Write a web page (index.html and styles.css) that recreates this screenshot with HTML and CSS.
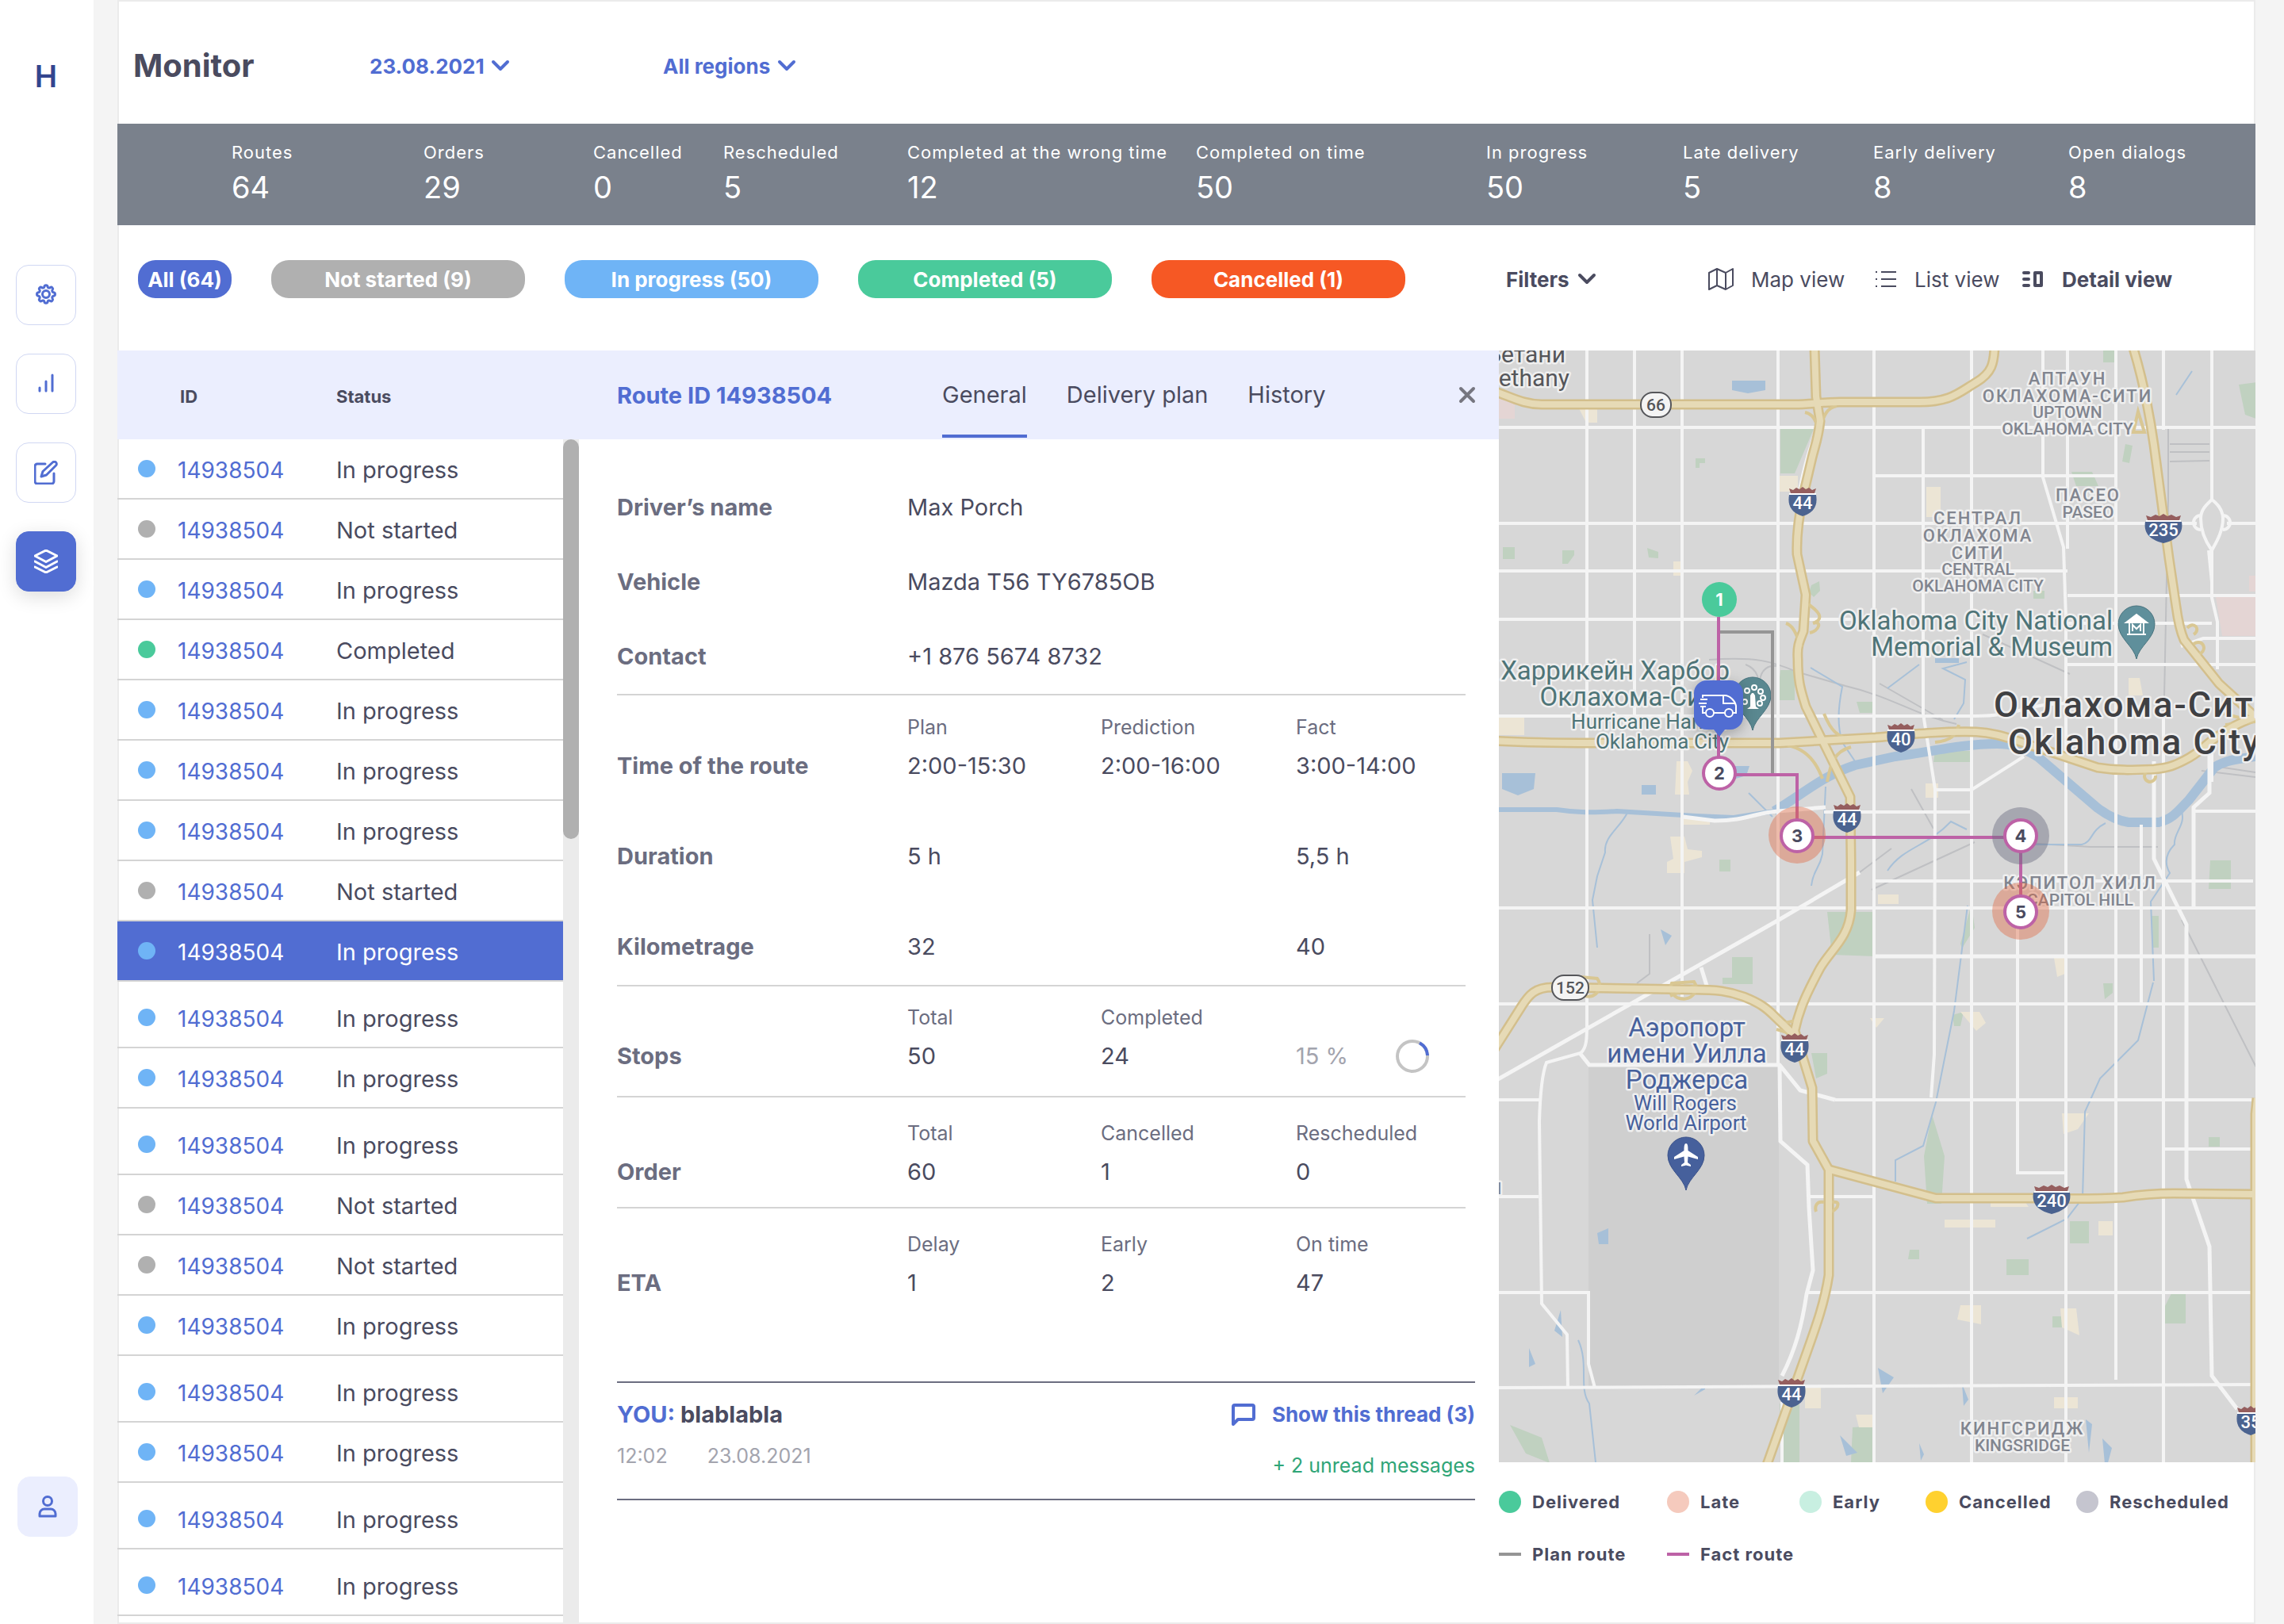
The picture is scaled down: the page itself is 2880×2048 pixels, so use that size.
FILE: index.html
```html
<!DOCTYPE html>
<html lang="en">
<head>
    <meta charset="UTF-8">
    <meta name="viewport" content="width=device-width, initial-scale=1.0">
    <title>Monitor</title>
    <link rel="stylesheet" href="styles.css">
</head>
<body>
    <aside class="sidebar">
        <a class="logo" href="#">H</a>
        <nav class="side-nav">
            <button class="side-btn" aria-label="Settings">
                <svg width="30" height="30" viewBox="0 0 30 30"><path d="M13 4.200c.3-2 3.700-2 4 0 .3 1.900 2.100 2.400 3.500 1.300 1.600-1.200 3.900 1.100 2.800 2.700-1.100 1.500-.5 3.200 1.300 3.500 2.500.4 2.500 4.200 0 4.600-1.800.3-2.400 2-1.300 3.500 1.100 1.600-1.200 3.900-2.800 2.700-1.400-1.100-3.200-.6-3.500 1.300-.3 2-3.700 2-4 0-.3-1.900-2.100-2.400-3.500-1.300-1.600 1.200-3.900-1.100-2.800-2.700 1.100-1.500.5-3.200-1.300-3.500-2.500-.4-2.500-4.200 0-4.600 1.800-.3 2.400-2 1.300-3.500C5.600 6.600 7.900 4.300 9.500 5.500c1.400 1.100 3.200.6 3.500-1.300z"/><circle cx="15" cy="14" r="4.500"/></svg>
            </button>
            <button class="side-btn" aria-label="Statistics">
                <svg width="30" height="30" viewBox="0 0 30 30"><path d="M7 20v4M15 12v12M23 4v20"/></svg>
            </button>
            <button class="side-btn" aria-label="Edit">
                <svg width="30" height="30" viewBox="0 0 30 30"><path d="M14 4H4a3 3 0 0 0-3 3v19a3 3 0 0 0 3 3h18a3 3 0 0 0 3-3V16"/><path d="M23.500 2a2.800 2.800 0 0 1 4 4L15.500 18 9 20l2-6.500z"/></svg>
            </button>
            <button class="side-btn active" aria-label="Routes">
                <svg width="30" height="30" viewBox="0 0 30 30"><path d="M15 1l14 7-14 7.500L1 8zM1 15l14 7.500L29 15M1 22l14 7 14-7"/></svg>
            </button>
        </nav>
        <button class="side-btn user" aria-label="Profile">
            <svg width="30" height="30" viewBox="0 0 30 30"><circle cx="15" cy="8" r="5.500"/><path d="M5 27v-3a6 6 0 0 1 6-6h8a6 6 0 0 1 6 6v3z"/></svg>
        </button>
    </aside>

    <main class="card">
        <header class="page-header">
            <h1>Monitor</h1>
            <div class="picker date">
                <select aria-label="Date"><option>23.08.2021</option></select>
                <svg class="chevron" width="24" height="16" viewBox="0 0 24 16"><path d="M3 3l9 9 9-9"/></svg>
            </div>
            <div class="picker region">
                <select aria-label="Region"><option>All regions</option></select>
                <svg class="chevron" width="24" height="16" viewBox="0 0 24 16"><path d="M3 3l9 9 9-9"/></svg>
            </div>
        </header>

        <dl class="stats">
            <div><dt>Routes</dt><dd>64</dd></div>
            <div><dt>Orders</dt><dd>29</dd></div>
            <div><dt>Cancelled</dt><dd>0</dd></div>
            <div><dt>Rescheduled</dt><dd>5</dd></div>
            <div><dt>Completed at the wrong time</dt><dd>12</dd></div>
            <div><dt>Completed on time</dt><dd>50</dd></div>
            <div><dt>In progress</dt><dd>50</dd></div>
            <div><dt>Late delivery</dt><dd>5</dd></div>
            <div><dt>Early delivery</dt><dd>8</dd></div>
            <div><dt>Open dialogs</dt><dd>8</dd></div>
        </dl>

        <div class="toolbar">
            <div class="pills">
                <button class="pill all">All (64)</button>
                <button class="pill not-started">Not started (9)</button>
                <button class="pill in-progress">In progress (50)</button>
                <button class="pill completed">Completed (5)</button>
                <button class="pill cancelled">Cancelled (1)</button>
            </div>
            <button class="filters">Filters
                <svg class="chevron" width="24" height="16" viewBox="0 0 24 16"><path d="M3 3l9 9 9-9"/></svg>
            </button>
            <div class="views">
                <button class="view">
                    <svg width="32" height="30" viewBox="0 0 32 30"><path d="M1 7l10-5 11 5 9-5v21l-9 5-11-5-10 5zM11 2v21M22 7v21"/></svg>
                    Map view
                </button>
                <button class="view">
                    <svg width="28" height="24" viewBox="0 0 28 24"><path d="M8 3h19M8 12h19M8 21h19M1 3h2M1 12h2M1 21h2"/></svg>
                    List view
                </button>
                <button class="view current">
                    <svg width="28" height="22" viewBox="0 0 28 22"><path d="M2 3h6M2 11h6M2 19h6M16 3h8v16h-8z"/></svg>
                    Detail view
                </button>
            </div>
        </div>

        <div class="panels">
            <section class="routes">
                <div class="routes-scroll">
                    <table>
                        <thead>
                            <tr><th class="dot-col"></th><th class="id-col">ID</th><th>Status</th></tr>
                        </thead>
                        <tbody id="route-rows"></tbody>
                    </table>
                </div>
                <div class="scrollbar"><div class="thumb"></div></div>
            </section>

            <section class="detail">
                <div class="detail-header">
                    <h2>Route ID 14938504</h2>
                    <nav class="tabs">
                        <a class="tab selected" href="#general">General</a>
                        <a class="tab" href="#plan">Delivery plan</a>
                        <a class="tab" href="#history">History</a>
                    </nav>
                    <button class="close" aria-label="Close">
                        <svg width="24" height="24" viewBox="0 0 24 24"><path d="M4 4l16 16M20 4L4 20"/></svg>
                    </button>
                </div>

                <div class="detail-body">
                    <div class="group driver">
                        <div class="row"><b>Driver’s name</b><span>Max Porch</span></div>
                        <div class="row"><b>Vehicle</b><span>Mazda T56 TY6785OB</span></div>
                        <div class="row"><b>Contact</b><span>+1 876 5674 8732</span></div>
                    </div>
                    <div class="group time">
                        <div class="row caption"><i></i><span>Plan</span><span>Prediction</span><span>Fact</span></div>
                        <div class="row"><b>Time of the route</b><span>2:00-15:30</span><span>2:00-16:00</span><span>3:00-14:00</span></div>
                        <div class="row spaced"><b>Duration</b><span>5 h</span><i></i><span>5,5 h</span></div>
                        <div class="row spaced"><b>Kilometrage</b><span>32</span><i></i><span>40</span></div>
                    </div>
                    <div class="group stops">
                        <div class="row caption"><i></i><span>Total</span><span>Completed</span></div>
                        <div class="row"><b>Stops</b><span>50</span><span>24</span>
                            <span class="percent">15 %
                                <svg width="42" height="42" viewBox="0 0 42 42"><circle cx="21" cy="21" r="19" stroke="#c4c4c4"/><path d="M30 4.300A19 19 0 0 1 40 20" stroke="#516dd2"/></svg>
                            </span>
                        </div>
                    </div>
                    <div class="group order">
                        <div class="row caption"><i></i><span>Total</span><span>Cancelled</span><span>Rescheduled</span></div>
                        <div class="row"><b>Order</b><span>60</span><span>1</span><span>0</span></div>
                    </div>
                    <div class="group eta">
                        <div class="row caption"><i></i><span>Delay</span><span>Early</span><span>On time</span></div>
                        <div class="row"><b>ETA</b><span>1</span><span>2</span><span>47</span></div>
                    </div>

                    <div class="thread">
                        <div>
                            <p class="message"><span class="author">YOU:</span> blablabla</p>
                            <p class="sent"><span>12:02</span><span>23.08.2021</span></p>
                        </div>
                        <div class="thread-side">
                            <a class="thread-link" href="#thread">
                                <svg width="30" height="28" viewBox="0 0 30 28"><path d="M2 26V4a2 2 0 0 1 2-2h22a2 2 0 0 1 2 2v14a2 2 0 0 1-2 2H8z"/></svg>
                                Show this thread (3)
                            </a>
                            <p class="unread">+ 2 unread messages</p>
                        </div>
                    </div>
                </div>
            </section>

            <section class="map-panel">
                <svg class="map" viewBox="1890 442 954 1402" preserveAspectRatio="xMidYMid slice" role="img" aria-label="Route map">
                    <defs>
                        <g id="shield">
                            <path d="M-17 -8h34c2 12-1 22-17 27-16-5-19-15-17-27z" fill="#4b6390"/>
                            <path d="M-15 -10l-2-6 5 2 4-3 4 2 4-3 4 3 4-2 4 3 5-2-2 6z" fill="#955e5e"/>
                            <path d="M-17 -9h34" stroke="#fff" stroke-width="2"/>
                        </g>
                        <g id="shield-wide">
                            <path d="M-23 -8h46c2 12-3 22-23 27-20-5-25-15-23-27z" fill="#4b6390"/>
                            <path d="M-20 -10l-2-6 6 2 6-3 5 2 5-3 5 3 5-2 6 3 6-2-2 6z" fill="#955e5e"/>
                            <path d="M-22 -9h44" stroke="#fff" stroke-width="2"/>
                        </g>
                        <path id="pin" d="M0 44C-3 28-23 18-23 0a23 23 0 0 1 46 0c0 18-20 28-23 44z"/>
                        <path id="h66" d="M1880 492c25 8 40 18 64 18h319c20 0 35-3 57-3h100c40 0 50-12 72-25 20-12 22-24 23-43"/>
                        <path id="h44" d="M2288 439l2 61 5 31c-2 20-6 30-10 46l-12 51c-4 22-8 45-7 71l11 51-3 46c-6 15-8 20-7 35 0 30 4 40 10 60l24 49 32 65 1 78v65c-3 35-24 48-39 73-16 30-26 50-32 79l22 72 1 67 20 36v133c-6 40-20 75-34 115l-44 124"/>
                        <path id="h40" d="M1880 934c60 4 110 3 172 3h192l121-7c45-4 80-8 127-7 20 1 35 6 51 11l102 34c25 4 45 3 71 2 20-2 26-5 38-11 18-9 22-15 32-23 20-14 30-22 58-32"/>
                        <path id="h235" d="M2690 439c12 40 20 80 26 122l19 143 9 61c2 15 4 28 10 42l44 55 46 42"/>
                        <path id="h240" d="M2307 1475l134 36h141c35 1 60 1 95-1 25-4 40-5 64-5l103 1"/>
                        <path id="h152" d="M1880 1330l38-60c10-16 18-25 40-25l177 3c30 0 45 2 64 9 20 8 28 14 38 24l26 25"/>
                        <path id="h35" d="M2846 1385l-2 20v445"/>
                    </defs>

                    <rect x="1890" y="442" width="954" height="1402" fill="#d7d7d7"/>
                    <path d="M2003 1342h240v404l-240 4z" fill="#cfcfcf"/>

                    <!-- parks, squares, schools -->
                    <path d="M2245 541h42l-24 56h-18zM2652 442h14v15h-14zM2823 485l22-3v46l-14-5zM2680 560l9 2-4 22-9-2zM2138 578h12v6h-7v6h-5zM1895 690h15v15h-15zM1970 694h15v6l-8 11h-7zM2077 691l14 5v8l-12-1zM2284 738l10-5 1 12-8 8-6-6zM2245 845h18v38h-22zM2341 885h22v14h-18zM2440 947h46v14h-48zM2168 1084h14v15h-14zM2304 1150h60v56l-54-2zM2184 1207h26v34h-38v-8h12zM2564 745h14v10h-14zM2787 1085h26v36h-28zM2436 1405l16 53-4 60h-18l-4-60zM2284 1328h20v26l-14 6zM2244 1770h25v76h-22zM2336 1800l28-2v46h-30zM2530 1588h28v20h-28zM2610 1540h24v28h-24zM2738 1631h18v38h-28v-18zM2408 1576h12v12h-14zM1904 1797l40 16 10 32-30-12zM2785 1434h14v12h-14zM2462 1280l14-4-4 18h-8zM2712 1155h10v40h-8zM2612 595h26l8 18h-28zM2486 1140l-14 50 2 6 16-26zM2652 1240h12v12l-10 8zM2588 1660h12v14h-12z" fill="#c0d1c0"/>
                    <path d="M1990 513h24v20h-14zM2241 600h26v20h-26zM2429 614h18v38h-18zM2110 708h10v18h-10zM1890 905h32v22h-32zM2114 960h14l6 12-6 14 2 16h-18zM2120 1030h36v10h-36zM2106 1055h18l4 16 18 2v8l-22 6v14h-22v-14l8-4zM2428 988h16v18h-16zM2368 1128h26v12h-26zM2590 1208h14v20l-10 4zM2472 1276h24l8 14-12 10zM2600 1404h34l-14 20-18 6zM2510 1508h38l10 14h-48zM2452 1538h64v10h-64zM2646 1540h18v18h-18zM2472 1646h26v24l-30-6zM2598 1650h20l4 34-22-10zM2590 1762h30v14h-30zM2276 1750h20v26h-20zM2340 1784h24v16h-20zM2684 855h14l4 22h-18zM2358 1284h18l-10 12z" fill="#ece5d5"/>
                    <path d="M2794 753h50v49h-42zM2836 726h8v20h-8zM1890 500h20v28h-20z" fill="#e4d5d4"/>
                    <path d="M2184 480h42v12l-22 4-20-4zM1894 975h42l-2 20-20 8-20-8zM2070 990h18v12h-18zM2182 966h24l-4 12-20 6zM2440 830h30v6h-30zM2014 1555l14-6v20h-12zM2094 1172l14 8-8 12zM1960 1678l8-26 2 34zM1928 1700l8 20-8 4zM2368 1725l20 12-14 20zM2474 1745l8 20-6 8zM2651 1814l12 12-8 30zM2420 1820l6 14-4 8zM2630 1790l8 6-4 36zM2320 1810l22 22-14 4zM2110 1640l10 4M2136 1760l14-14v6z" fill="#a7c0d8"/>

                    <!-- railways and creeks -->
                    <g fill="none" stroke="#bfc0c3" stroke-width="2">
                        <path d="M2155 832c60-4 80 2 110 15l62 18c60 14 90 38 140 48M2219 880c0-24-2-36-18-42M2219 858c2-14 10-20 24-18M2370 862l80 46M2500 800l110 50M2734 540v90l-6 300-1 130M2736 560h50M2736 570h50M2736 582l50-1M2243 1160l102-60 40-30M2536 1062l100 6h85M2751 1160l96 190M2490 1062l-130 60"/>
                        <path d="M2064 1240l16-12v-50M2776 972l68 8M2790 966l54 8M2410 995l28 50"/>
                    </g>
                    <g fill="none" stroke="#a7c0d8" stroke-width="2">
                        <path d="M2052 1025c-10 20-30 30-28 50l-10 30-6 30 6 60M2283 842l40 24c-6 30-6 50 0 70l16 24M2480 835l-30 8 28 14-2 30-12 20M2420 838l-40 30M2302 992l-4 85c-4 20-12 20-14 40M2481 1142l-17 133-23 115-16 55-35 18v27M2715 1239l-19 73-48 48-19 42-3 109-20 26-50 25M2655 1038c-20 10-16 24-30 27h-70M2750 1020c8 20-10 30-8 45-10 10-14 22-6 36l-24 36 4 100M2380 1098c20-30 50-30 80-62l20 10M2205 1000l30 30M2744 498l20-30M1990 1690c14 30 0 60 14 80l8 74"/>
                        <path d="M1880 1021l83 0c26 4 45 4 76 2l100 6 47 2 51-8" stroke-width="6"/>
                        <path d="M2237 1023c40-24 60-44 102-58l51-11c45-6 85-16 128-16 22 0 34 6 51 16l76 65c12 9 25 16 39 18h38c18-4 26-16 38-28l32-41c14-10 28-10 52-14" stroke-width="12"/>
                    </g>

                    <!-- streets -->
                    <g fill="none" stroke="#f4f4f4" stroke-width="4">
                        <path d="M2001 442v850c0 16 0 30-8 36l-43 12c-6 15-8 40-9 74l3 230 32 39 1 67M2061 442v461M2121 442v815M2242 442v901M2247 1768v76M2363 442v1402M2425 540v360l15 95-1 335-4 54M2486 442v1402M2576 442v160l26 88 3 90v1064M2607 442v250M2668 442v1298M2700 1040v224M2728 900v944M2728 442v100M2544 1149v330h61"/>
                        <path d="M2789 442v188c-6 6-14 12-14 24 0 14 4 26 14 40v60l7 30v60M2789 630c8 6 14 14 14 24 0 14-6 26-14 40M2775 650a9 9 0 1 0 0 18M2803 650a9 9 0 1 1 0 18M2789 940v46M2785 694l4 40"/>
                        <path d="M1890 539h954M1890 660h880M2808 660h36M1890 720h717M1890 781h520M2363 600h305M1890 903h600c60 0 60-16 120-16M2300 1024h184M2363 1111h478M2767 1023h77M1890 1145h954M1890 1266h954M1890 1387h53M2314 1387h530M2728 1449h112M1890 1509h50M2280 1509h83M1890 1630h113v90l8 30M2280 1630h560M1890 1750l954-4M2607 751h237M2607 786h182M2607 838h237M2750 815l28-10h66M2440 996h46l66-42"/>
                        <path d="M2363 1206h481M2786 930v70l-20 18v127M2716 960v123l41 83v321l29 85 3 163 32 42M1992 1328l12 15h240l26 32 44 12M2244 1343l1 96 34 30 2 54 5 79-8 30c-6 40-14 70-31 103M1880 1366l363-206 102-60M2122 1030l40 5c40 0 50-10 80-12l60-5M2145 1220l8 26" stroke-width="5"/>
                        <path d="M2289 545c-10 30-16 50-22 84"/>
                    </g>

                    <!-- highways -->
                    <g fill="none" stroke="#d3bf8c" stroke-width="13" stroke-linejoin="round">
                        <use href="#h66"/><use href="#h44"/><use href="#h40"/><use href="#h235"/><use href="#h240"/><use href="#h152"/><use href="#h35"/>
                    </g>
                    <g fill="none" stroke="#d9c793" stroke-width="4">
                        <path d="M2276 520c10 2 14 10 16 20M2316 512c-12 2-16 12-20 24M2252 786c12 4 14 20 20 30M2280 762c18 12 18 20 6 24 12-4 8 10-4 12M2254 940c22 4 36 20 44 42M2300 900c8 20 16 30 38 34M2304 986c4-22 8-38 30-44M2440 936c20-2 26-8 30-22M2690 545l6-26 8 26zM2766 800c10-6 0-18-8-8M2770 826c16-4 8-22-4-14M2300 1516c-10-2-12 6-10 12M2310 1516c10-2 10 6 0 12M2250 1290l20-4M2240 1298l20 6"/>
                        <path d="M1994 1232a14 14 0 1 0 20 2zM2108 1240a16 14 0 1 0 28-2zM2106 1256l34-14M2706 974a7 7 0 1 0 12 4M2804 900l40 10M2806 914l38-4M2290 1440c4 16 14 20 16 36"/>
                    </g>
                    <g fill="none" stroke="#e6dab6" stroke-width="8" stroke-linejoin="round">
                        <use href="#h66"/><use href="#h44"/><use href="#h40"/><use href="#h235"/><use href="#h240"/><use href="#h152"/><use href="#h35"/>
                    </g>

                    <!-- place names -->
                    <g class="town" text-anchor="end">
                        <text x="1974" y="457">Бетани</text>
                        <text x="1979" y="487">Bethany</text>
                    </g>
                    <g class="district" text-anchor="middle">
                        <text class="tracked" x="2607" y="485">АПТАУН</text>
                        <text class="tracked" x="2607" y="507">ОКЛАХОМА-СИТИ</text>
                        <text x="2607" y="527">UPTOWN</text>
                        <text x="2607" y="548">OKLAHOMA CITY</text>
                        <text class="tracked" x="2633" y="632">ПАСЕО</text>
                        <text x="2633" y="653">PASEO</text>
                        <text class="tracked" x="2494" y="661">СЕНТРАЛ</text>
                        <text class="tracked" x="2494" y="683">ОКЛАХОМА</text>
                        <text class="tracked" x="2494" y="705">СИТИ</text>
                        <text x="2494" y="725">CENTRAL</text>
                        <text x="2494" y="746">OKLAHOMA CITY</text>
                        <text class="tracked" x="2623" y="1121">КЭПИТОЛ ХИЛЛ</text>
                        <text x="2623" y="1142">CAPITOL HILL</text>
                        <text class="tracked" x="2550" y="1809">КИНГСРИДЖ</text>
                        <text x="2550" y="1830">KINGSRIDGE</text>
                        <text x="1886" y="1506">И</text>
                    </g>
                    <g class="sight" text-anchor="end">
                        <text x="2664" y="794">Oklahoma City National</text>
                        <text x="2664" y="827">Memorial &amp; Museum</text>
                        <text x="2181" y="857">Харрикейн Харбор</text>
                        <text x="2181" y="890">Оклахома-Сити</text>
                        <text class="minor" x="2180" y="919">Hurricane Harbor</text>
                        <text class="minor" x="2180" y="944">Oklahoma City</text>
                    </g>
                    <g class="airport" text-anchor="middle">
                        <text x="2127" y="1307">Аэропорт</text>
                        <text x="2127" y="1340">имени Уилла</text>
                        <text x="2127" y="1373">Роджерса</text>
                        <text class="minor" x="2125" y="1400">Will Rogers</text>
                        <text class="minor" x="2126" y="1425">World Airport</text>
                    </g>
                    <g class="city">
                        <text x="2514" y="904">Оклахома-Сити</text>
                        <text x="2532" y="951">Oklahoma City</text>
                    </g>

                    <g class="road-no" text-anchor="middle">
                        <rect x="2069" y="495" width="38" height="31" rx="15"/>
                        <text x="2088" y="518">66</text>
                        <rect x="1957" y="1230" width="46" height="31" rx="15"/>
                        <text x="1980" y="1253">152</text>
                    </g>
                    <g class="shield-no" text-anchor="middle">
                        <use href="#shield" x="2273" y="632"/><text x="2273" y="642">44</text>
                        <use href="#shield-wide" x="2728" y="666"/><text x="2728" y="676">235</text>
                        <use href="#shield" x="2397" y="930"/><text x="2397" y="940">40</text>
                        <use href="#shield" x="2329" y="1031"/><text x="2329" y="1041">44</text>
                        <use href="#shield" x="2263" y="1321"/><text x="2263" y="1331">44</text>
                        <use href="#shield-wide" x="2587" y="1512"/><text x="2587" y="1522">240</text>
                        <use href="#shield" x="2259" y="1756"/><text x="2259" y="1766">44</text>
                        <use href="#shield" x="2838" y="1791"/><text x="2838" y="1801">35</text>
                    </g>

                    <!-- sight pins -->
                    <g transform="translate(2694 787)">
                        <use href="#pin" fill="#5f8f9b" stroke="#47737e" stroke-width="1"/>
                        <path d="M-13-2L0-12l13 10zM-12 13h24" fill="#fff" stroke="#fff" stroke-width="2"/>
                        <path d="M-9-2v14M9-2v14M-5 9V1l5 5 5-5v8" fill="none" stroke="#fff" stroke-width="2"/>
                    </g>
                    <g transform="translate(2210 877)">
                        <use href="#pin" fill="#5a8890" stroke="#47737e" stroke-width="1"/>
                        <g fill="none" stroke="#fff" stroke-width="2"><circle cx="2" cy="-10" r="3"/><circle cx="-7" cy="-6" r="3"/><circle cx="10" cy="-5" r="3"/><circle cx="13" cy="3" r="3"/><circle cx="9" cy="10" r="3"/><circle cx="-10" cy="8" r="3"/></g>
                        <path d="M-3 0l2-3h2l2 3 1 14 4 3H-7l4-3z" fill="#fff"/>
                    </g>
                    <g transform="translate(2126 1457)">
                        <use href="#pin" fill="#46609c" stroke="#3b528a" stroke-width="1"/>
                        <path d="M0-15c2 0 2.500 3 2.500 9L15 2v3L2.500 1.500 2 9l4 3v2L0 12.500-6 14v-2l4-3-.5-7.500L-15 5V2l12.500-8c0-6 .5-9 2.500-9z" fill="#fff"/>
                    </g>

                    <!-- routes -->
                    <path d="M2169 797h66v178" fill="none" stroke="#959595" stroke-width="4"/>
                    <path d="M2167 778v180M2188 977h78v62M2286 1056h242M2548 1074v56" fill="none" stroke="#bd62a6" stroke-width="4"/>
                    <circle cx="2266" cy="1053" r="36" fill="#e2643c" fill-opacity=".4"/>
                    <circle cx="2548" cy="1054" r="36" fill="#6b6d80" fill-opacity=".45"/>
                    <circle cx="2548" cy="1149" r="36" fill="#e2643c" fill-opacity=".4"/>
                    <g class="stop-no" text-anchor="middle">
                        <circle class="done" cx="2168" cy="756" r="22"/><text class="done-no" x="2168" y="764">1</text>
                        <circle cx="2168" cy="975" r="20"/><text x="2168" y="983">2</text>
                        <circle cx="2266" cy="1054" r="20"/><text x="2266" y="1062">3</text>
                        <circle cx="2548" cy="1054" r="20"/><text x="2548" y="1062">4</text>
                        <circle cx="2548" cy="1150" r="20"/><text x="2548" y="1158">5</text>
                    </g>
                    <g class="van" transform="translate(2136 858)">
                        <path d="M16 0h30a16 16 0 0 1 16 16v30a16 16 0 0 1-16 16h-7l-7 9-7-9h-9A16 16 0 0 1 0 46V16A16 16 0 0 1 16 0z" fill="#516dd2"/>
                        <path d="M11 22V19h28c6 0 13 7 14 13v9h-4M39 41H25M14 41h-3v-8M37 19v10h15M8 24h9M6 29h10M8 33h7" fill="none" stroke="#fff" stroke-width="2"/>
                        <circle cx="20" cy="41" r="5" fill="none" stroke="#fff" stroke-width="2"/>
                        <circle cx="44" cy="41" r="5" fill="none" stroke="#fff" stroke-width="2"/>
                    </g>
                </svg>

                <ul class="legend">
                    <li><span class="mark delivered"></span>Delivered</li>
                    <li><span class="mark late"></span>Late</li>
                    <li><span class="mark early"></span>Early</li>
                    <li><span class="mark cancel"></span>Cancelled</li>
                    <li><span class="mark resched"></span>Rescheduled</li>
                    <li><span class="line plan"></span>Plan route</li>
                    <li><span class="line fact"></span>Fact route</li>
                </ul>
            </section>
        </div>
    </main>

    <script>
        const P = 'In progress', N = 'Not started', C = 'Completed';
        const statuses = [P, N, P, C, P, P, P, N, P, P, P, P, N, N, P, P, P, P, P];
        const tall = [9, 11, 15, 17, 18];
        const selected = 8;

        const body = document.getElementById('route-rows');
        statuses.forEach((status, i) => {
            const tr = document.createElement('tr');
            if (tall.includes(i)) tr.classList.add('tall');
            if (i === selected) tr.classList.add('selected');
            const dot = status.toLowerCase().replace(' ', '-');
            tr.innerHTML = `
                <td class="dot-col"><span class="dot ${dot}"></span></td>
                <td class="id-col"><a href="#14938504">14938504</a></td>
                <td class="status">${status}</td>
            `;
            body.appendChild(tr);
        });
    </script>
</body>
</html>
```
FILE: styles.css
```css
* {
    box-sizing: border-box;
}
body {
    margin: 0;
    display: flex;
    min-height: 100vh;
    background: #f4f4f4;
    color: #4a4b5f;
    font-family: Inter, "Open Sans", sans-serif;
    font-size: 29px;
}
h1, h2, p, dl, dd, ul {
    margin: 0;
    padding: 0;
}
a {
    color: #516dd2;
    text-decoration: none;
}
button {
    border: 0;
    padding: 0;
    background: none;
    color: inherit;
    font: inherit;
    cursor: pointer;
}
svg {
    display: block;
}

/* sidebar */
.sidebar {
    width: 118px;
    flex: none;
    display: flex;
    flex-direction: column;
    align-items: center;
    background: #fff;
    padding: 72px 2px 110px 0;
}
.logo {
    color: #33458f;
    font-size: 38px;
    font-weight: 600;
    line-height: 48px;
}
.side-nav {
    margin-top: 214px;
    display: flex;
    flex-direction: column;
    gap: 36px;
}
.side-btn {
    width: 76px;
    height: 76px;
    display: flex;
    align-items: center;
    justify-content: center;
    border: 1px solid #d0d7f3;
    border-radius: 16px;
}
.side-btn svg {
    fill: none;
    stroke: #516dd2;
    stroke-width: 3;
    stroke-linecap: round;
    stroke-linejoin: round;
}
.side-btn.active {
    background: #516dd2;
    border-color: #516dd2;
    box-shadow: 0 6px 24px rgba(0, 0, 0, 0.14);
}
.side-btn.active svg {
    stroke: #fff;
}
.side-btn.user {
    margin-top: auto;
    margin-left: 4px;
    background: #ebeefe;
    border-color: #ebeefe;
}

/* main card */
.card {
    flex: 1;
    min-width: 0;
    margin: 0 36px 0 30px;
    display: flex;
    flex-direction: column;
    background: #fff;
    box-shadow: inset 0 0 0 2px #ebebeb;
}
.page-header {
    height: 156px;
    display: flex;
    align-items: center;
    padding: 10px 20px 0;
}
h1 {
    width: 298px;
    font-size: 40px;
    line-height: 48px;
}
.picker {
    width: 370px;
    display: flex;
    align-items: center;
    color: #516dd2;
}
.picker select {
    appearance: none;
    border: 0;
    padding: 0 34px 0 0;
    margin-right: -26px;
    background: none;
    color: inherit;
    font: inherit;
    font-size: 26px;
    font-weight: 700;
}
.chevron {
    fill: none;
    stroke: currentColor;
    stroke-width: 4;
    stroke-linecap: round;
    stroke-linejoin: round;
    pointer-events: none;
}

.stats {
    height: 128px;
    display: grid;
    grid-template-columns: 242fr 214fr 164fr 232fr 364fr 366fr 248fr 240fr 246fr 236fr;
    padding: 20px 0 0 144px;
    background: #7a818c;
    color: #fff;
    white-space: nowrap;
}
.stats dt {
    font-size: 22px;
    line-height: 32px;
    letter-spacing: 1px;
}
.stats dd {
    margin-top: 4px;
    font-size: 38px;
    line-height: 48px;
}

/* toolbar */
.toolbar {
    height: 158px;
    display: flex;
    align-items: flex-start;
    padding: 44px 100px 0 26px;
    font-size: 26px;
    white-space: nowrap;
}
.pills {
    display: flex;
    gap: 50px;
}
.pill {
    width: 320px;
    height: 48px;
    border-radius: 22px;
    color: #fff;
    font-weight: 700;
}
.pill.all {
    width: 118px;
    background: #516dd2;
}
.not-started {
    background: #b0b0b0;
}
.in-progress {
    background: #6fb4f6;
}
.completed {
    background: #4aca9b;
}
.cancelled {
    background: #f65824;
}
.filters {
    height: 48px;
    margin-left: 127px;
    display: flex;
    align-items: center;
    gap: 10px;
    font-weight: 700;
}
.views {
    margin-left: auto;
    display: grid;
    grid-template-columns: 210px 186px 194px;
}
.view {
    height: 48px;
    display: flex;
    align-items: center;
    gap: 22px;
}
.view svg {
    fill: none;
    stroke: currentColor;
    stroke-width: 2;
    stroke-linejoin: round;
}
.view.current {
    font-weight: 700;
}
.view.current svg {
    stroke-width: 4;
    stroke-linecap: round;
}

/* three panels */
.panels {
    flex: 1;
    display: grid;
    grid-template-columns: 582fr 1160fr 954fr;
}
.routes {
    display: grid;
    grid-template-columns: 1fr 20px;
    padding-bottom: 2px;
    background: linear-gradient(#ebeefe 112px, transparent 112px);
}
.routes table {
    width: 100%;
    border-collapse: separate;
    border-spacing: 0;
    table-layout: fixed;
}
.routes th {
    height: 112px;
    padding: 4px 0 0;
    font-size: 22px;
    text-align: left;
}
.routes td {
    height: 76px;
    padding: 4px 0 0;
    border-bottom: 2px solid #d4d4d4;
    line-height: 36px;
}
.routes td.id-col {
    font-size: 28px;
}
.routes .dot-col {
    width: 76px;
    padding-top: 0;
    padding-left: 26px;
}
.routes .id-col {
    width: 200px;
}
.routes th.id-col {
    padding-left: 3px;
}
.routes .tall td {
    height: 84px;
    padding-top: 12px;
}
.routes .tall .dot-col {
    padding-top: 8px;
}
.routes .selected td {
    background: #516dd2;
    color: #fff;
}
.routes .selected a {
    color: #fff;
}
.dot {
    display: block;
    width: 22px;
    height: 22px;
    border-radius: 50%;
}
.scrollbar {
    margin-top: 112px;
    background: #ebebeb;
}
.thumb {
    height: 504px;
    border-radius: 10px;
    background: #b0b0b0;
}

.detail-header {
    height: 112px;
    display: flex;
    align-items: center;
    padding: 0 28px 0 48px;
    background: #ebeefe;
}
.detail-header h2 {
    width: 410px;
    color: #516dd2;
    font-size: 29px;
}
.tabs {
    flex: 1;
    display: flex;
    gap: 50px;
}
.tab {
    height: 108px;
    border-bottom: 4px solid transparent;
    color: #4a4b5f;
    line-height: 108px;
}
.tab.selected {
    border-color: #516dd2;
}
.close svg {
    fill: none;
    stroke: #767680;
    stroke-width: 4;
    stroke-linecap: round;
}

.detail-body {
    padding: 0 30px 0 48px;
}
.group {
    margin-right: 12px;
    border-bottom: 2px solid #d4d4d4;
}
.row {
    display: grid;
    grid-template-columns: minmax(0, 366fr) minmax(0, 244fr) minmax(0, 246fr) minmax(0, 214fr);
    line-height: 40px;
    white-space: nowrap;
}
.row b {
    color: #6b6d80;
    font-weight: 700;
}
.caption {
    color: #6b6d80;
    font-size: 25px;
    line-height: 34px;
    margin-bottom: 12px;
}
.spaced {
    margin-top: 74px;
}
.driver .row {
    line-height: 94px;
}
.driver {
    padding-top: 39px;
}
.time {
    padding: 23px 0 28px;
}
.stops {
    padding: 22px 0 30px;
}
.order {
    padding: 28px 0 24px;
}
.eta {
    padding-top: 28px;
    border-bottom: 0;
}
.percent {
    height: 40px;
    display: flex;
    align-items: center;
    gap: 60px;
    color: #a3a4ae;
}
.percent svg {
    fill: none;
    stroke-width: 4;
}

.thread {
    margin-top: 104px;
    height: 150px;
    display: flex;
    justify-content: space-between;
    border-top: 2px solid #6b6d80;
    border-bottom: 2px solid #6b6d80;
    padding-top: 20px;
}
.message {
    font-weight: 700;
    line-height: 40px;
}
.author {
    color: #516dd2;
}
.sent {
    margin-top: 15px;
    display: flex;
    gap: 50px;
    color: #a3a4ae;
    font-size: 25px;
    line-height: 34px;
}
.thread-side {
    text-align: right;
    font-size: 26px;
}
.thread-link {
    display: flex;
    align-items: center;
    gap: 21px;
    font-weight: 700;
    line-height: 40px;
}
.thread-link svg {
    fill: none;
    stroke: #516dd2;
    stroke-width: 4;
    stroke-linejoin: round;
}
.unread {
    margin-top: 27px;
    color: #2fa577;
    font-size: 25px;
    line-height: 34px;
}

/* map */
.map {
    width: 100%;
    height: 1402px;
    font-family: Roboto, sans-serif;
}
.map text {
    paint-order: stroke;
    stroke: #efefef;
    stroke-width: 5px;
    stroke-linejoin: round;
}
.map .town {
    fill: #55565a;
    font-size: 30px;
}
.map .district {
    fill: #81858f;
    font-size: 21px;
    font-weight: 500;
}
.map .tracked {
    font-size: 22px;
    letter-spacing: 2px;
}
.map .sight {
    fill: #4e7477;
    font-size: 33px;
}
.map .airport {
    fill: #46609c;
    font-size: 33px;
}
.map .sight .minor, .map .airport .minor {
    font-size: 26px;
}
.map .city {
    fill: #3f4043;
    font-size: 45px;
    font-weight: 500;
    letter-spacing: 2px;
}
.road-no rect {
    fill: #f4f4f4;
    stroke: #55565a;
    stroke-width: 2px;
}
.map .road-no text {
    fill: #55565a;
    stroke: none;
    font-size: 21px;
    font-weight: 500;
}
.map .shield-no text {
    fill: #fff;
    stroke: none;
    font-size: 22px;
    font-weight: 500;
}
.stop-no circle {
    fill: #fff;
    stroke: #bd62a6;
    stroke-width: 4px;
}
.stop-no .done {
    fill: #4aca9b;
    stroke: none;
}
.map .stop-no text {
    fill: #4a4b5f;
    stroke: none;
    font-family: Inter, sans-serif;
    font-size: 22px;
    font-weight: 700;
}
.map .stop-no .done-no {
    fill: #fff;
}
.van {
    filter: drop-shadow(0 4px 8px rgba(0, 0, 0, 0.25));
}

.legend {
    display: grid;
    grid-template-columns: 212fr 167fr 159fr 190fr 226fr;
    row-gap: 26px;
    padding-top: 30px;
    list-style: none;
    font-size: 22px;
    font-weight: 700;
    line-height: 40px;
    letter-spacing: 1px;
    white-space: nowrap;
}
.legend li {
    display: flex;
    align-items: center;
    gap: 14px;
}
.mark {
    width: 28px;
    height: 28px;
    border-radius: 50%;
}
.line {
    width: 28px;
    height: 4px;
}
.delivered {
    background: #4aca9b;
}
.late {
    background: #f5cabd;
}
.early {
    background: #c8efe1;
}
.cancel {
    background: #ffd12f;
}
.resched {
    background: #c5c5cf;
}
.plan {
    background: #959595;
}
.fact {
    background: #bd62a6;
}
```
